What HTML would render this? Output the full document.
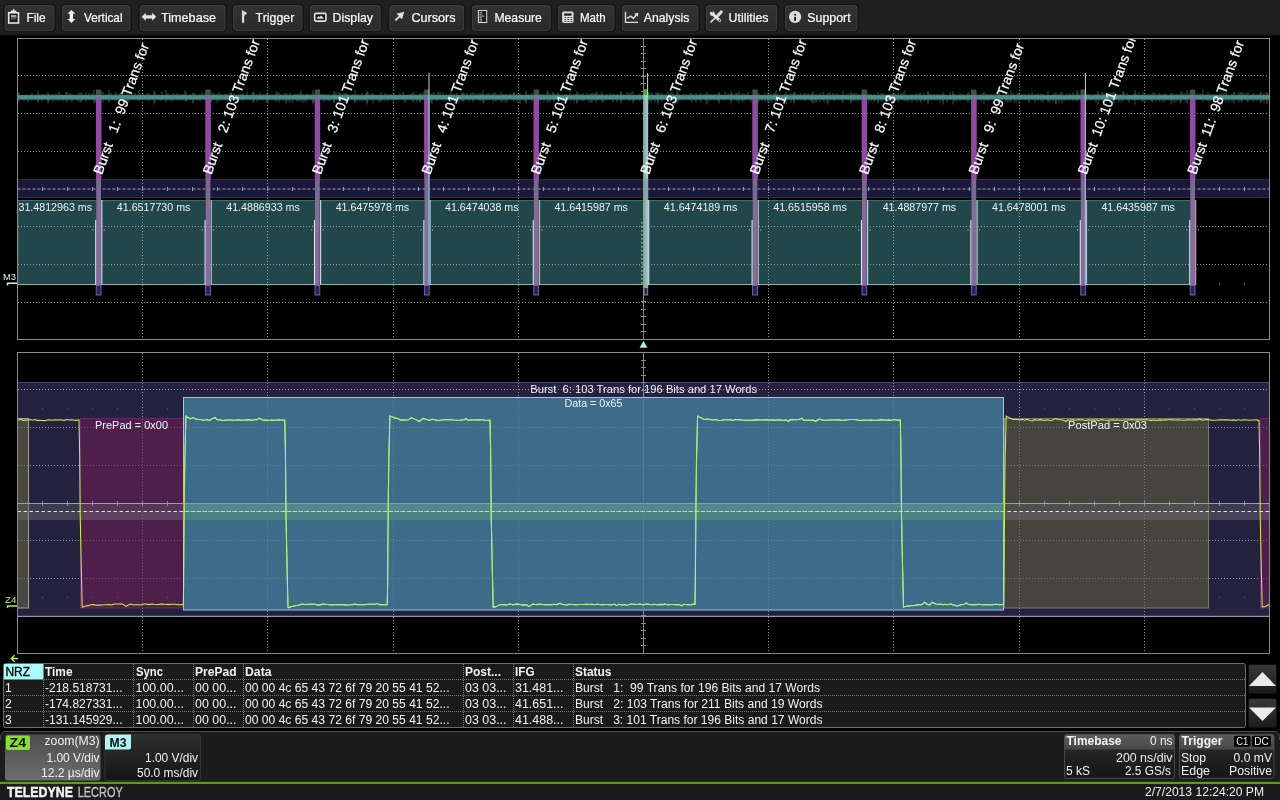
<!DOCTYPE html>
<html><head><meta charset="utf-8"><title>Oscilloscope</title>
<style>html,body{margin:0;padding:0;background:#000;width:1280px;height:800px;overflow:hidden}svg{display:block;position:absolute;left:0;top:0;font-family:"Liberation Sans", sans-serif;will-change:transform;opacity:0.999}text{font-family:"Liberation Sans", sans-serif}</style></head><body>
<svg width="1280" height="800" viewBox="0 0 1280 800">
<defs><linearGradient id="btn" x1="0" y1="0" x2="0" y2="1"><stop offset="0" stop-color="#343434"/><stop offset="1" stop-color="#2b2b2b"/></linearGradient><linearGradient id="hdr" x1="0" y1="0" x2="0" y2="1"><stop offset="0" stop-color="#5c5c5c"/><stop offset="1" stop-color="#484848"/></linearGradient><linearGradient id="z4" x1="0" y1="0" x2="0" y2="1"><stop offset="0" stop-color="#4e4e4e"/><stop offset="1" stop-color="#6e6e6e"/></linearGradient><linearGradient id="m3" x1="0" y1="0" x2="0" y2="1"><stop offset="0" stop-color="#303030"/><stop offset="1" stop-color="#161616"/></linearGradient><linearGradient id="sb" x1="0" y1="0" x2="0" y2="1"><stop offset="0" stop-color="#3a3a3a"/><stop offset="1" stop-color="#1c1c1c"/></linearGradient><clipPath id="ct"><rect x="18" y="39" width="1251" height="300"/></clipPath><clipPath id="cb"><rect x="18" y="353" width="1251" height="300"/></clipPath></defs>
<rect x="0" y="0" width="1280" height="35" fill="#202020"/>
<rect x="0" y="34" width="1280" height="1.5" fill="#181818"/>
<rect x="4" y="4.5" width="51" height="27" rx="3.5" fill="url(#btn)" stroke="#151515" stroke-width="1.6"/>
<rect x="5.1" y="5.6" width="48.8" height="24.8" rx="2.6" fill="none" stroke="#424242" stroke-width="0.8"/>
<text x="26.5" y="22.2" font-size="12.6" fill="#ffffff" textLength="19.1" lengthAdjust="spacingAndGlyphs" stroke="#ffffff" stroke-width="0.2" xml:space="preserve">File</text>
<rect x="61.5" y="4.5" width="69.5" height="27" rx="3.5" fill="url(#btn)" stroke="#151515" stroke-width="1.6"/>
<rect x="62.6" y="5.6" width="67.3" height="24.8" rx="2.6" fill="none" stroke="#424242" stroke-width="0.8"/>
<text x="84" y="22.2" font-size="12.6" fill="#ffffff" textLength="38.5" lengthAdjust="spacingAndGlyphs" stroke="#ffffff" stroke-width="0.2" xml:space="preserve">Vertical</text>
<rect x="139" y="4.5" width="87" height="27" rx="3.5" fill="url(#btn)" stroke="#151515" stroke-width="1.6"/>
<rect x="140.1" y="5.6" width="84.8" height="24.8" rx="2.6" fill="none" stroke="#424242" stroke-width="0.8"/>
<text x="161" y="22.2" font-size="12.6" fill="#ffffff" textLength="55" lengthAdjust="spacingAndGlyphs" stroke="#ffffff" stroke-width="0.2" xml:space="preserve">Timebase</text>
<rect x="232.5" y="4.5" width="70.5" height="27" rx="3.5" fill="url(#btn)" stroke="#151515" stroke-width="1.6"/>
<rect x="233.6" y="5.6" width="68.3" height="24.8" rx="2.6" fill="none" stroke="#424242" stroke-width="0.8"/>
<text x="255.6" y="22.2" font-size="12.6" fill="#ffffff" textLength="38.8" lengthAdjust="spacingAndGlyphs" stroke="#ffffff" stroke-width="0.2" xml:space="preserve">Trigger</text>
<rect x="309.4" y="4.5" width="71.9" height="27" rx="3.5" fill="url(#btn)" stroke="#151515" stroke-width="1.6"/>
<rect x="310.5" y="5.6" width="69.7" height="24.8" rx="2.6" fill="none" stroke="#424242" stroke-width="0.8"/>
<text x="332.5" y="22.2" font-size="12.6" fill="#ffffff" textLength="40.5" lengthAdjust="spacingAndGlyphs" stroke="#ffffff" stroke-width="0.2" xml:space="preserve">Display</text>
<rect x="388.7" y="4.5" width="76.1" height="27" rx="3.5" fill="url(#btn)" stroke="#151515" stroke-width="1.6"/>
<rect x="389.8" y="5.6" width="73.9" height="24.8" rx="2.6" fill="none" stroke="#424242" stroke-width="0.8"/>
<text x="411.5" y="22.2" font-size="12.6" fill="#ffffff" textLength="44.1" lengthAdjust="spacingAndGlyphs" stroke="#ffffff" stroke-width="0.2" xml:space="preserve">Cursors</text>
<rect x="471.3" y="4.5" width="80" height="27" rx="3.5" fill="url(#btn)" stroke="#151515" stroke-width="1.6"/>
<rect x="472.4" y="5.6" width="77.8" height="24.8" rx="2.6" fill="none" stroke="#424242" stroke-width="0.8"/>
<text x="494.4" y="22.2" font-size="12.6" fill="#ffffff" textLength="47.5" lengthAdjust="spacingAndGlyphs" stroke="#ffffff" stroke-width="0.2" xml:space="preserve">Measure</text>
<rect x="557.5" y="4.5" width="57.5" height="27" rx="3.5" fill="url(#btn)" stroke="#151515" stroke-width="1.6"/>
<rect x="558.6" y="5.6" width="55.3" height="24.8" rx="2.6" fill="none" stroke="#424242" stroke-width="0.8"/>
<text x="580" y="22.2" font-size="12.6" fill="#ffffff" textLength="25.6" lengthAdjust="spacingAndGlyphs" stroke="#ffffff" stroke-width="0.2" xml:space="preserve">Math</text>
<rect x="621.3" y="4.5" width="77.7" height="27" rx="3.5" fill="url(#btn)" stroke="#151515" stroke-width="1.6"/>
<rect x="622.4" y="5.6" width="75.5" height="24.8" rx="2.6" fill="none" stroke="#424242" stroke-width="0.8"/>
<text x="643.8" y="22.2" font-size="12.6" fill="#ffffff" textLength="45.6" lengthAdjust="spacingAndGlyphs" stroke="#ffffff" stroke-width="0.2" xml:space="preserve">Analysis</text>
<rect x="705.3" y="4.5" width="72.5" height="27" rx="3.5" fill="url(#btn)" stroke="#151515" stroke-width="1.6"/>
<rect x="706.4" y="5.6" width="70.3" height="24.8" rx="2.6" fill="none" stroke="#424242" stroke-width="0.8"/>
<text x="728.5" y="22.2" font-size="12.6" fill="#ffffff" textLength="40" lengthAdjust="spacingAndGlyphs" stroke="#ffffff" stroke-width="0.2" xml:space="preserve">Utilities</text>
<rect x="784.4" y="4.5" width="73.6" height="27" rx="3.5" fill="url(#btn)" stroke="#151515" stroke-width="1.6"/>
<rect x="785.5" y="5.6" width="71.4" height="24.8" rx="2.6" fill="none" stroke="#424242" stroke-width="0.8"/>
<text x="807.3" y="22.2" font-size="12.6" fill="#ffffff" textLength="43.3" lengthAdjust="spacingAndGlyphs" stroke="#ffffff" stroke-width="0.2" xml:space="preserve">Support</text>
<rect x="8.7" y="12.8" width="9.8" height="10.2" fill="#1c1c1c" stroke="#e6e6e6" stroke-width="1.6"/>
<path d="M10.2 12.6L11.2 10.4H12.6L13.6 8.6L14.6 10.4H16L17 12.6Z" fill="#e6e6e6"/>
<rect x="10.9" y="15" width="5.4" height="2.2" fill="#a6a6a6"/>
<rect x="10.9" y="17.2" width="5.4" height="1.6" fill="#6c6c6c"/>
<rect x="10.9" y="18.8" width="5.4" height="1.4" fill="#3c3c3c"/>
<path d="M71.4 10L75.3 13.8H73.1V19.1H75.3L71.4 22.9L67.5 19.1H69.7V13.8H67.5Z" fill="#f4f4f4"/>
<path d="M141.7 16.8L145.7 12.8V15.2H152.2V12.8L156.2 16.8L152.2 20.8V18.4H145.7V20.8Z" fill="#e8e8e8"/>
<path d="M241.9 10L247.2 13L244.2 15.7V22.8H241.9Z" fill="#dadada"/>
<rect x="314.7" y="13.4" width="11.2" height="7.7" rx="1" fill="#1a1a1a" stroke="#e6e6e6" stroke-width="1.6"/>
<path d="M316.6 18.7L318.2 15.9L319.4 17.1L321 15.5L322.4 16.8L323.9 18.7Z" fill="#e0e0e0"/>
<path d="M404.3 11.7L396.5 13.8L398.9 15.7L395.2 19.2Q394.5 20.6 396 21.1L399.9 17.3L401.9 19.3Z" fill="#e4e4e4"/>
<rect x="478.4" y="10.5" width="8.3" height="12" fill="#202020" stroke="#cfcfcf" stroke-width="1.1"/>
<path d="M479.5 12.6H482M479.5 14.3H482M479.5 16.1H484.3M479.5 17.9H482M479.5 19.6H482M479.5 21.2H482" stroke="#bdbdbd" stroke-width="0.9" fill="none"/>
<rect x="562.2" y="11.4" width="11.3" height="11.5" rx="1.6" fill="#e6e6e6"/>
<rect x="564.1" y="13.4" width="7.5" height="2.3" fill="#202020"/>
<rect x="564.4" y="17" width="1.9" height="0.9" fill="#2a2a2a"/>
<rect x="564.4" y="19.1" width="1.9" height="0.9" fill="#2a2a2a"/>
<rect x="564.4" y="21" width="1.9" height="0.9" fill="#2a2a2a"/>
<rect x="567.4" y="17" width="1.9" height="0.9" fill="#2a2a2a"/>
<rect x="567.4" y="19.1" width="1.9" height="0.9" fill="#2a2a2a"/>
<rect x="567.4" y="21" width="1.9" height="0.9" fill="#2a2a2a"/>
<rect x="570.4" y="17" width="1.9" height="0.9" fill="#2a2a2a"/>
<rect x="570.4" y="19.1" width="1.9" height="0.9" fill="#2a2a2a"/>
<rect x="570.4" y="21" width="1.9" height="0.9" fill="#2a2a2a"/>
<path d="M625.5 11.7V22.4H638" stroke="#dcdcdc" stroke-width="1.4" fill="none"/>
<path d="M627 18.3L630.8 16.2L633.4 18.4L636.6 14.6" stroke="#dcdcdc" stroke-width="1.5" fill="none"/>
<path d="M638.3 12.8L637.9 17L634.2 13.5Z" fill="#dcdcdc"/>
<path d="M721.2 12L718 15.4" stroke="#dedede" stroke-width="3.1" stroke-linecap="round" fill="none"/>
<path d="M718 15.4L711 21.9" stroke="#d4d4d4" stroke-width="1.7" stroke-linecap="round" fill="none"/>
<path d="M712.6 13.8L719.6 20.5" stroke="#e4e4e4" stroke-width="3" stroke-linecap="round" fill="none"/>
<circle cx="712.3" cy="13.6" r="2.4" fill="#e4e4e4"/>
<path d="M710.2 10.6L713.2 13.2L712.4 10.4Z" fill="#2e2e2e"/>
<circle cx="719.5" cy="20.4" r="0.8" fill="#2a2a2a"/>
<circle cx="795.1" cy="16.9" r="6.1" fill="#dcdcdc"/>
<rect x="794.2" y="13.8" width="1.8" height="1.8" fill="#333"/>
<rect x="794.2" y="16.9" width="1.8" height="3.9" fill="#0a0a0a"/>
<g clip-path="url(#ct)">
<rect x="17" y="179" width="1253" height="19" fill="#1c1a3b"/>
<line x1="17" y1="179.5" x2="1270" y2="179.5" stroke="#2f2c55" stroke-width="1"/>
<line x1="17" y1="197.5" x2="1270" y2="197.5" stroke="#2f2c55" stroke-width="1"/>
<rect x="17.5" y="200" width="78.8" height="85" fill="#23484c"/>
<line x1="17.5" y1="200.5" x2="96.3" y2="200.5" stroke="#3f6e6e" stroke-width="1"/>
<line x1="17.7" y1="200" x2="17.7" y2="285" stroke="#5c9a97" stroke-width="1"/>
<line x1="17.5" y1="284.5" x2="96.3" y2="284.5" stroke="#86b4b0" stroke-width="1"/>
<rect x="101.9" y="200" width="103.8" height="85" fill="#23484c"/>
<line x1="101.9" y1="200.5" x2="205.7" y2="200.5" stroke="#3f6e6e" stroke-width="1"/>
<line x1="102.1" y1="200" x2="102.1" y2="285" stroke="#5c9a97" stroke-width="1"/>
<line x1="101.9" y1="284.5" x2="205.7" y2="284.5" stroke="#86b4b0" stroke-width="1"/>
<rect x="211.3" y="200" width="103.8" height="85" fill="#23484c"/>
<line x1="211.3" y1="200.5" x2="315.1" y2="200.5" stroke="#3f6e6e" stroke-width="1"/>
<line x1="211.5" y1="200" x2="211.5" y2="285" stroke="#5c9a97" stroke-width="1"/>
<line x1="211.3" y1="284.5" x2="315.1" y2="284.5" stroke="#86b4b0" stroke-width="1"/>
<rect x="320.7" y="200" width="103.8" height="85" fill="#23484c"/>
<line x1="320.7" y1="200.5" x2="424.5" y2="200.5" stroke="#3f6e6e" stroke-width="1"/>
<line x1="320.9" y1="200" x2="320.9" y2="285" stroke="#5c9a97" stroke-width="1"/>
<line x1="320.7" y1="284.5" x2="424.5" y2="284.5" stroke="#86b4b0" stroke-width="1"/>
<rect x="430.1" y="200" width="103.8" height="85" fill="#23484c"/>
<line x1="430.1" y1="200.5" x2="533.9" y2="200.5" stroke="#3f6e6e" stroke-width="1"/>
<line x1="430.3" y1="200" x2="430.3" y2="285" stroke="#5c9a97" stroke-width="1"/>
<line x1="430.1" y1="284.5" x2="533.9" y2="284.5" stroke="#86b4b0" stroke-width="1"/>
<rect x="539.5" y="200" width="103.8" height="85" fill="#23484c"/>
<line x1="539.5" y1="200.5" x2="643.3" y2="200.5" stroke="#3f6e6e" stroke-width="1"/>
<line x1="539.7" y1="200" x2="539.7" y2="285" stroke="#5c9a97" stroke-width="1"/>
<line x1="539.5" y1="284.5" x2="643.3" y2="284.5" stroke="#86b4b0" stroke-width="1"/>
<rect x="648.9" y="200" width="103.8" height="85" fill="#23484c"/>
<line x1="648.9" y1="200.5" x2="752.7" y2="200.5" stroke="#3f6e6e" stroke-width="1"/>
<line x1="649.1" y1="200" x2="649.1" y2="285" stroke="#5c9a97" stroke-width="1"/>
<line x1="648.9" y1="284.5" x2="752.7" y2="284.5" stroke="#86b4b0" stroke-width="1"/>
<rect x="758.3" y="200" width="103.8" height="85" fill="#23484c"/>
<line x1="758.3" y1="200.5" x2="862.1" y2="200.5" stroke="#3f6e6e" stroke-width="1"/>
<line x1="758.5" y1="200" x2="758.5" y2="285" stroke="#5c9a97" stroke-width="1"/>
<line x1="758.3" y1="284.5" x2="862.1" y2="284.5" stroke="#86b4b0" stroke-width="1"/>
<rect x="867.7" y="200" width="103.8" height="85" fill="#23484c"/>
<line x1="867.7" y1="200.5" x2="971.5" y2="200.5" stroke="#3f6e6e" stroke-width="1"/>
<line x1="867.9" y1="200" x2="867.9" y2="285" stroke="#5c9a97" stroke-width="1"/>
<line x1="867.7" y1="284.5" x2="971.5" y2="284.5" stroke="#86b4b0" stroke-width="1"/>
<rect x="977.1" y="200" width="103.8" height="85" fill="#23484c"/>
<line x1="977.1" y1="200.5" x2="1080.9" y2="200.5" stroke="#3f6e6e" stroke-width="1"/>
<line x1="977.3" y1="200" x2="977.3" y2="285" stroke="#5c9a97" stroke-width="1"/>
<line x1="977.1" y1="284.5" x2="1080.9" y2="284.5" stroke="#86b4b0" stroke-width="1"/>
<rect x="1086.5" y="200" width="103.8" height="85" fill="#23484c"/>
<line x1="1086.5" y1="200.5" x2="1190.3" y2="200.5" stroke="#3f6e6e" stroke-width="1"/>
<line x1="1086.7" y1="200" x2="1086.7" y2="285" stroke="#5c9a97" stroke-width="1"/>
<line x1="1086.5" y1="284.5" x2="1190.3" y2="284.5" stroke="#86b4b0" stroke-width="1"/>
</g>
<line x1="142.5" y1="39" x2="142.5" y2="339" stroke="#b4b4b4" stroke-width="1" stroke-dasharray="1 2" opacity="0.8"/>
<line x1="267.5" y1="39" x2="267.5" y2="339" stroke="#b4b4b4" stroke-width="1" stroke-dasharray="1 2" opacity="0.8"/>
<line x1="393.5" y1="39" x2="393.5" y2="339" stroke="#b4b4b4" stroke-width="1" stroke-dasharray="1 2" opacity="0.8"/>
<line x1="518.5" y1="39" x2="518.5" y2="339" stroke="#b4b4b4" stroke-width="1" stroke-dasharray="1 2" opacity="0.8"/>
<line x1="768.5" y1="39" x2="768.5" y2="339" stroke="#b4b4b4" stroke-width="1" stroke-dasharray="1 2" opacity="0.8"/>
<line x1="893.5" y1="39" x2="893.5" y2="339" stroke="#b4b4b4" stroke-width="1" stroke-dasharray="1 2" opacity="0.8"/>
<line x1="1019.5" y1="39" x2="1019.5" y2="339" stroke="#b4b4b4" stroke-width="1" stroke-dasharray="1 2" opacity="0.8"/>
<line x1="1144.5" y1="39" x2="1144.5" y2="339" stroke="#b4b4b4" stroke-width="1" stroke-dasharray="1 2" opacity="0.8"/>
<line x1="18" y1="75.5" x2="1269" y2="75.5" stroke="#b4b4b4" stroke-width="1" stroke-dasharray="1 2" opacity="0.8"/>
<line x1="18" y1="113.5" x2="1269" y2="113.5" stroke="#b4b4b4" stroke-width="1" stroke-dasharray="1 2" opacity="0.8"/>
<line x1="18" y1="151.5" x2="1269" y2="151.5" stroke="#b4b4b4" stroke-width="1" stroke-dasharray="1 2" opacity="0.8"/>
<line x1="18" y1="226.5" x2="1269" y2="226.5" stroke="#b4b4b4" stroke-width="1" stroke-dasharray="1 2" opacity="0.8"/>
<line x1="18" y1="264.5" x2="1269" y2="264.5" stroke="#b4b4b4" stroke-width="1" stroke-dasharray="1 2" opacity="0.8"/>
<line x1="18" y1="302.5" x2="1269" y2="302.5" stroke="#b4b4b4" stroke-width="1" stroke-dasharray="1 2" opacity="0.8"/>
<g clip-path="url(#ct)">
<line x1="17.5" y1="189" x2="1269.5" y2="189" stroke="#a8a1c8" stroke-width="1" stroke-dasharray="3 2"/>
<path d="M42.5 187V191M67.5 187V191M92.5 187V191M117.5 187V191M142.5 187V191M167.5 187V191M192.5 187V191M217.5 187V191M242.5 187V191M267.5 187V191M292.5 187V191M317.5 187V191M343.5 187V191M368.5 187V191M393.5 187V191M418.5 187V191M443.5 187V191M468.5 187V191M493.5 187V191M518.5 187V191M543.5 187V191M568.5 187V191M593.5 187V191M618.5 187V191M643.5 187V191M668.5 187V191M693.5 187V191M718.5 187V191M743.5 187V191M768.5 187V191M793.5 187V191M818.5 187V191M843.5 187V191M868.5 187V191M893.5 187V191M918.5 187V191M943.5 187V191M969.5 187V191M994.5 187V191M1019.5 187V191M1044.5 187V191M1069.5 187V191M1094.5 187V191M1119.5 187V191M1144.5 187V191M1169.5 187V191M1194.5 187V191M1219.5 187V191M1244.5 187V191" stroke="#9c96bc" stroke-width="1" fill="none"/>
<line x1="643.5" y1="38.5" x2="643.5" y2="339.5" stroke="#8a8a8a" stroke-width="1"/>
<path d="M641 46.5H646M641 53.5H646M641 61.5H646M641 68.5H646M641 76.5H646M641 83.5H646M641 91.5H646M641 301.5H646M641 309.5H646M641 316.5H646M641 324.5H646M641 331.5H646" stroke="#8a8a8a" stroke-width="1" fill="none"/>
<path d="M18 93V100.5M21 95V99.5M24 95V101.5M27 95V100.5M28 95V102.5M31 95V100.5M32 93V99.5M35 95V100.5M38 95V102.5M39 94V99.5M42 94V101.5M45 94V99.5M48 94V100.5M49 94V101.5M50 95V99.5M53 94V102.5M56 93V101.5M59 92V101.5M61 94V100.5M63 95V101.5M66 92V101.5M69 94V99.5M70 93V100.5M72 94V102.5M75 95V99.5M78 93V101.5M80 92V102.5M81 95V101.5M84 95V99.5M86 92V101.5M89 93V99.5M92 93V100.5M95 95V102.5M96 94V101.5M98 94V102.5M101 92V99.5M103 92V102.5M106 94V100.5M109 94V102.5M111 93V100.5M113 95V100.5M115 94V100.5M116 92V100.5M118 94V99.5M120 93V101.5M123 93V100.5M126 95V102.5M129 93V102.5M132 93V99.5M135 93V99.5M137 95V100.5M140 94V99.5M142 95V99.5M143 94V99.5M145 95V99.5M147 93V100.5M149 93V101.5M152 95V99.5M155 92V102.5M158 94V99.5M160 95V101.5M162 92V100.5M165 95V100.5M168 93V100.5M171 95V101.5M172 94V101.5M174 93V100.5M177 93V100.5M180 94V100.5M183 94V100.5M186 92V101.5M187 95V101.5M190 94V100.5M193 93V102.5M195 93V99.5M197 95V100.5M200 94V101.5M202 92V99.5M205 93V99.5M206 93V100.5M209 94V102.5M211 95V102.5M214 93V99.5M216 94V100.5M217 94V102.5M219 92V101.5M221 94V99.5M222 95V100.5M225 94V100.5M226 94V100.5M228 94V101.5M230 93V100.5M231 93V102.5M234 93V100.5M237 94V99.5M240 94V99.5M242 94V100.5M245 95V99.5M247 92V99.5M250 95V100.5M252 94V99.5M253 92V99.5M254 92V101.5M257 94V101.5M260 92V100.5M263 94V100.5M266 94V102.5M267 93V102.5M269 95V100.5M272 95V100.5M274 95V100.5M276 94V101.5M278 92V100.5M279 93V102.5M281 94V100.5M284 93V101.5M287 94V101.5M289 95V101.5M290 93V102.5M293 95V102.5M295 94V99.5M296 94V99.5M297 94V101.5M298 94V101.5M300 93V101.5M303 94V102.5M305 95V101.5M306 94V102.5M307 94V99.5M308 94V99.5M311 94V99.5M313 95V102.5M314 93V102.5M316 94V99.5M319 94V99.5M321 94V99.5M323 94V101.5M325 94V101.5M328 94V101.5M330 95V101.5M331 95V99.5M334 94V102.5M336 92V99.5M339 92V102.5M342 94V100.5M344 93V100.5M346 93V101.5M347 94V99.5M348 94V102.5M350 95V99.5M353 94V100.5M355 95V102.5M357 94V101.5M360 95V101.5M362 93V101.5M364 95V101.5M366 93V100.5M367 93V102.5M368 92V101.5M371 94V100.5M374 95V99.5M376 95V100.5M379 95V102.5M380 94V101.5M382 95V100.5M385 93V101.5M388 94V101.5M391 94V99.5M394 93V100.5M397 95V100.5M398 95V99.5M400 93V99.5M403 92V99.5M404 94V102.5M406 95V102.5M407 95V99.5M410 94V99.5M412 94V100.5M414 92V102.5M417 95V102.5M419 95V100.5M420 94V101.5M422 94V100.5M423 92V99.5M426 94V99.5M428 92V101.5M431 94V102.5M434 92V99.5M437 94V101.5M438 92V99.5M440 92V99.5M443 92V101.5M446 94V100.5M447 95V100.5M450 94V101.5M452 94V99.5M454 94V102.5M457 93V99.5M459 95V102.5M462 93V101.5M464 93V101.5M467 93V99.5M469 95V101.5M471 93V99.5M473 95V101.5M475 93V99.5M478 93V99.5M480 93V101.5M481 94V99.5M482 94V100.5M484 94V102.5M487 93V100.5M489 93V99.5M492 94V99.5M493 93V102.5M496 94V101.5M499 95V100.5M501 92V102.5M503 94V101.5M505 94V102.5M507 94V102.5M510 93V99.5M512 94V99.5M514 92V100.5M517 93V102.5M520 94V100.5M522 95V100.5M524 95V101.5M526 93V101.5M529 94V99.5M532 93V102.5M535 94V102.5M537 93V99.5M540 94V101.5M542 94V99.5M544 94V102.5M547 92V102.5M549 95V100.5M550 93V102.5M553 92V99.5M554 93V102.5M557 94V99.5M559 94V100.5M562 95V102.5M563 95V99.5M565 94V99.5M567 94V101.5M570 93V99.5M571 95V101.5M574 94V102.5M576 94V99.5M577 94V102.5M579 93V100.5M582 94V100.5M583 93V101.5M584 95V100.5M587 93V99.5M589 94V102.5M591 94V102.5M592 93V102.5M594 93V100.5M595 94V99.5M597 92V100.5M599 94V100.5M602 94V101.5M604 95V102.5M607 94V100.5M610 93V99.5M613 94V102.5M614 94V99.5M617 94V102.5M618 95V100.5M621 92V101.5M622 95V100.5M624 94V100.5M627 92V99.5M629 93V101.5M631 92V100.5M632 95V99.5M634 95V101.5M637 95V100.5M640 93V101.5M643 95V99.5M646 94V101.5M649 92V100.5M651 93V102.5M652 93V100.5M655 95V102.5M656 92V99.5M657 94V100.5M658 93V101.5M660 93V99.5M662 93V101.5M664 95V99.5M665 94V99.5M668 92V102.5M670 93V102.5M672 92V100.5M673 94V100.5M676 94V101.5M678 92V101.5M681 95V100.5M684 94V100.5M687 95V99.5M690 93V100.5M693 95V99.5M695 95V100.5M696 93V102.5M699 94V100.5M701 93V102.5M704 94V99.5M706 94V101.5M709 94V101.5M711 94V100.5M714 94V100.5M716 94V100.5M718 94V101.5M719 93V101.5M721 94V99.5M724 95V99.5M725 92V100.5M728 93V99.5M730 94V99.5M731 94V100.5M732 93V100.5M735 94V99.5M736 93V100.5M737 93V101.5M739 95V100.5M741 95V100.5M742 93V102.5M744 94V101.5M745 94V99.5M748 92V99.5M751 95V102.5M754 94V99.5M756 93V101.5M759 94V101.5M762 95V101.5M765 93V102.5M768 95V101.5M770 93V102.5M772 95V102.5M774 93V99.5M775 93V101.5M778 94V100.5M779 95V100.5M782 95V101.5M785 94V100.5M787 94V100.5M790 94V99.5M791 93V102.5M793 94V100.5M794 92V101.5M795 93V99.5M798 94V100.5M801 93V100.5M804 94V100.5M805 93V100.5M808 93V99.5M810 94V100.5M811 95V101.5M812 93V102.5M815 94V102.5M817 94V102.5M820 93V102.5M823 92V100.5M824 95V102.5M827 94V102.5M830 92V100.5M833 93V99.5M834 94V101.5M837 93V99.5M840 95V99.5M842 95V101.5M845 95V99.5M848 93V100.5M849 95V99.5M851 94V102.5M853 94V100.5M854 93V101.5M856 93V101.5M859 94V101.5M862 92V100.5M865 94V100.5M867 93V99.5M869 94V102.5M871 94V101.5M874 94V101.5M875 95V101.5M878 95V101.5M881 93V101.5M883 93V101.5M886 94V101.5M888 95V102.5M890 94V99.5M892 94V101.5M895 93V99.5M896 94V100.5M898 93V102.5M901 93V99.5M903 92V100.5M906 95V99.5M907 95V101.5M909 95V101.5M912 94V102.5M915 94V100.5M917 93V102.5M919 94V99.5M921 94V102.5M922 95V100.5M924 93V101.5M925 95V101.5M928 92V102.5M930 94V99.5M931 95V99.5M934 94V100.5M936 95V99.5M937 94V100.5M940 94V102.5M943 94V101.5M944 94V99.5M947 95V102.5M950 92V99.5M953 94V100.5M954 94V100.5M955 95V101.5M957 95V101.5M960 93V101.5M962 94V99.5M965 95V100.5M967 94V100.5M969 93V100.5M972 93V100.5M975 92V102.5M978 95V99.5M981 94V101.5M983 93V99.5M986 94V100.5M987 95V99.5M988 94V101.5M990 95V99.5M991 94V99.5M992 95V99.5M995 93V100.5M998 95V102.5M999 94V100.5M1001 95V99.5M1002 95V101.5M1005 95V100.5M1006 94V101.5M1008 93V102.5M1010 95V101.5M1012 94V99.5M1014 93V102.5M1016 95V102.5M1017 93V99.5M1019 92V99.5M1022 94V99.5M1025 94V100.5M1028 95V100.5M1030 95V99.5M1032 92V99.5M1035 94V102.5M1038 93V101.5M1041 94V101.5M1043 94V102.5M1045 95V99.5M1048 95V101.5M1050 95V102.5M1053 95V102.5M1054 93V100.5M1056 94V102.5M1059 94V102.5M1061 92V100.5M1064 95V101.5M1067 93V100.5M1070 93V100.5M1073 92V101.5M1076 94V100.5M1078 92V100.5M1081 94V101.5M1083 94V100.5M1085 93V101.5M1087 94V101.5M1089 94V99.5M1091 95V100.5M1094 94V100.5M1096 94V102.5M1098 94V99.5M1099 94V100.5M1102 92V99.5M1103 93V102.5M1105 94V102.5M1106 94V101.5M1109 93V99.5M1111 93V102.5M1113 94V100.5M1114 92V102.5M1116 94V99.5M1119 94V102.5M1121 94V102.5M1124 92V99.5M1127 93V100.5M1129 95V102.5M1132 95V99.5M1134 94V100.5M1136 93V99.5M1139 92V100.5M1142 95V101.5M1145 93V102.5M1148 94V100.5M1151 95V101.5M1152 94V101.5M1155 93V99.5M1156 95V102.5M1159 93V101.5M1160 94V101.5M1163 94V102.5M1166 94V100.5M1168 95V100.5M1171 94V100.5M1173 93V102.5M1175 94V102.5M1177 94V101.5M1180 94V102.5M1182 92V99.5M1184 93V100.5M1186 93V102.5M1189 93V99.5M1191 94V101.5M1194 95V99.5M1197 93V100.5M1200 93V99.5M1201 94V99.5M1203 94V99.5M1206 94V100.5M1208 92V101.5M1210 94V102.5M1213 94V99.5M1216 94V100.5M1219 94V99.5M1222 95V99.5M1224 93V100.5M1226 92V102.5M1229 95V102.5M1232 94V102.5M1234 92V100.5M1237 95V100.5M1239 92V102.5M1241 92V101.5M1244 93V99.5M1246 93V99.5M1247 95V101.5M1248 92V102.5M1250 95V100.5M1253 94V101.5M1254 93V101.5M1257 94V101.5M1260 93V102.5M1262 95V101.5M1264 93V102.5M1267 93V101.5" stroke="#37605d" stroke-width="1" fill="none" opacity="0.9"/>
<path d="M19 92V102.5M38 91V101.5M48 92V103.5M67 92V102.5M82 93V101.5M94 90V103.5M109 90V101.5M121 92V101.5M127 93V102.5M139 90V101.5M154 90V104.5M166 90V102.5M185 90V101.5M193 93V103.5M212 92V101.5M231 92V101.5M243 93V101.5M253 92V103.5M268 92V103.5M276 91V101.5M286 93V103.5M301 90V101.5M313 90V104.5M319 93V103.5M334 91V103.5M340 93V103.5M355 90V102.5M367 91V104.5M373 93V103.5M381 92V101.5M393 93V101.5M412 93V101.5M420 93V102.5M432 93V103.5M451 90V102.5M463 92V101.5M473 92V101.5M483 90V103.5M495 92V101.5M514 93V101.5M520 93V104.5M526 91V103.5M536 90V102.5M548 90V101.5M558 92V104.5M577 91V103.5M596 92V102.5M602 92V102.5M621 91V103.5M633 91V103.5M648 92V103.5M658 93V104.5M677 90V103.5M692 93V102.5M707 92V104.5M719 92V103.5M731 91V104.5M739 91V103.5M758 93V103.5M768 92V103.5M776 90V101.5M786 92V104.5M794 92V104.5M813 91V103.5M828 93V104.5M843 91V103.5M851 92V103.5M866 93V103.5M878 92V103.5M893 93V103.5M905 90V101.5M920 92V101.5M928 91V104.5M943 92V104.5M953 91V104.5M968 92V102.5M976 92V101.5M984 92V103.5M999 90V103.5M1011 90V102.5M1019 93V103.5M1029 93V103.5M1048 91V101.5M1056 92V104.5M1062 92V103.5M1077 90V101.5M1083 93V102.5M1098 91V104.5M1113 92V103.5M1123 91V101.5M1135 90V104.5M1143 92V101.5M1153 92V102.5M1165 93V101.5M1171 93V104.5M1181 91V103.5M1187 90V103.5M1193 93V103.5M1203 90V102.5M1222 93V104.5M1234 92V103.5M1242 92V102.5M1261 92V102.5M1267 92V103.5" stroke="#55716f" stroke-width="1" fill="none" opacity="0.7"/>
<rect x="17" y="94.8" width="1253" height="4.9" fill="#3f7f7a"/>
<rect x="17" y="95.6" width="1253" height="3.2" fill="#4b918a"/>
<rect x="95.9" y="89.5" width="5.4" height="5.5" fill="#3f5255"/>
<rect x="95.9" y="95" width="5.4" height="84" fill="#9a47a3"/>
<rect x="99.7" y="99.5" width="1.6" height="80" fill="#7a58a4" opacity="0.9"/>
<rect x="95.9" y="95" width="5.4" height="4.4" fill="#6b7d96"/>
<rect x="96.2" y="179" width="4.8" height="21" fill="#7c6b90"/>
<rect x="96.2" y="200" width="4.8" height="85" fill="#886c9a"/>
<line x1="95.7" y1="220" x2="95.7" y2="285" stroke="#e4e0f4" stroke-width="1.1"/>
<line x1="101.7" y1="200" x2="101.7" y2="285" stroke="#c4d2e2" stroke-width="1"/>
<rect x="92.4" y="229.5" width="1" height="1" fill="#d8d8e8"/>
<rect x="103.8" y="229.5" width="1" height="1" fill="#d8d8e8"/>
<rect x="96.2" y="285.5" width="4.8" height="9.5" fill="#2b2266" stroke="#7d6ba8" stroke-width="0.9"/>
<rect x="205.3" y="89.5" width="5.4" height="5.5" fill="#3f5255"/>
<rect x="205.3" y="95" width="5.4" height="84" fill="#9a47a3"/>
<rect x="209.1" y="99.5" width="1.6" height="80" fill="#7a58a4" opacity="0.9"/>
<rect x="205.3" y="95" width="5.4" height="4.4" fill="#6b7d96"/>
<rect x="205.6" y="179" width="4.8" height="21" fill="#7c6b90"/>
<rect x="205.6" y="200" width="4.8" height="85" fill="#886c9a"/>
<line x1="205.1" y1="220" x2="205.1" y2="285" stroke="#e4e0f4" stroke-width="1.1"/>
<line x1="211.1" y1="200" x2="211.1" y2="285" stroke="#c4d2e2" stroke-width="1"/>
<rect x="201.8" y="229.5" width="1" height="1" fill="#d8d8e8"/>
<rect x="213.2" y="229.5" width="1" height="1" fill="#d8d8e8"/>
<rect x="205.6" y="285.5" width="4.8" height="9.5" fill="#2b2266" stroke="#7d6ba8" stroke-width="0.9"/>
<rect x="314.7" y="89.5" width="5.4" height="5.5" fill="#3f5255"/>
<rect x="314.7" y="95" width="5.4" height="84" fill="#9a47a3"/>
<rect x="318.5" y="99.5" width="1.6" height="80" fill="#7a58a4" opacity="0.9"/>
<rect x="314.7" y="95" width="5.4" height="4.4" fill="#6b7d96"/>
<rect x="315" y="179" width="4.8" height="21" fill="#7c6b90"/>
<rect x="315" y="200" width="4.8" height="85" fill="#886c9a"/>
<line x1="314.5" y1="220" x2="314.5" y2="285" stroke="#e4e0f4" stroke-width="1.1"/>
<line x1="320.5" y1="200" x2="320.5" y2="285" stroke="#c4d2e2" stroke-width="1"/>
<rect x="311.2" y="229.5" width="1" height="1" fill="#d8d8e8"/>
<rect x="322.6" y="229.5" width="1" height="1" fill="#d8d8e8"/>
<rect x="315" y="285.5" width="4.8" height="9.5" fill="#2b2266" stroke="#7d6ba8" stroke-width="0.9"/>
<rect x="424.1" y="89.5" width="5.4" height="5.5" fill="#3f5255"/>
<rect x="424.1" y="95" width="5.4" height="84" fill="#9a47a3"/>
<rect x="427.9" y="99.5" width="1.6" height="80" fill="#7a58a4" opacity="0.9"/>
<rect x="424.1" y="95" width="5.4" height="4.4" fill="#6b7d96"/>
<rect x="424.4" y="179" width="4.8" height="21" fill="#7c6b90"/>
<rect x="424.4" y="200" width="4.8" height="85" fill="#886c9a"/>
<line x1="423.9" y1="220" x2="423.9" y2="285" stroke="#e4e0f4" stroke-width="1.1"/>
<line x1="429.9" y1="200" x2="429.9" y2="285" stroke="#c4d2e2" stroke-width="1"/>
<rect x="420.6" y="229.5" width="1" height="1" fill="#d8d8e8"/>
<rect x="432" y="229.5" width="1" height="1" fill="#d8d8e8"/>
<line x1="429" y1="73" x2="429" y2="95" stroke="#c9d6da" stroke-width="1"/>
<line x1="429" y1="95" x2="429" y2="285" stroke="#86c2e4" stroke-width="1.2"/>
<rect x="424.4" y="285.5" width="4.8" height="9.5" fill="#2b2266" stroke="#7d6ba8" stroke-width="0.9"/>
<rect x="533.5" y="89.5" width="5.4" height="5.5" fill="#3f5255"/>
<rect x="533.5" y="95" width="5.4" height="84" fill="#9a47a3"/>
<rect x="537.3" y="99.5" width="1.6" height="80" fill="#7a58a4" opacity="0.9"/>
<rect x="533.5" y="95" width="5.4" height="4.4" fill="#6b7d96"/>
<rect x="533.8" y="179" width="4.8" height="21" fill="#7c6b90"/>
<rect x="533.8" y="200" width="4.8" height="85" fill="#886c9a"/>
<line x1="533.3" y1="220" x2="533.3" y2="285" stroke="#e4e0f4" stroke-width="1.1"/>
<line x1="539.3" y1="200" x2="539.3" y2="285" stroke="#c4d2e2" stroke-width="1"/>
<rect x="530" y="229.5" width="1" height="1" fill="#d8d8e8"/>
<rect x="541.4" y="229.5" width="1" height="1" fill="#d8d8e8"/>
<rect x="533.8" y="285.5" width="4.8" height="9.5" fill="#2b2266" stroke="#7d6ba8" stroke-width="0.9"/>
<rect x="643.6" y="89" width="4.5" height="6" fill="#4e9a46"/>
<rect x="643.6" y="95" width="4.5" height="190" fill="#8db79a"/>
<rect x="646.2" y="99.5" width="1.9" height="185.5" fill="#a3c3de"/>
<rect x="643.6" y="94.8" width="4.5" height="4.9" fill="#8fdca0"/>
<rect x="643.6" y="179" width="4.5" height="21" fill="#7fa596" opacity="0.75"/>
<line x1="647.6" y1="73" x2="647.6" y2="95" stroke="#c9d6da" stroke-width="1"/>
<line x1="648.5" y1="200" x2="648.5" y2="285" stroke="#c4d2e2" stroke-width="1"/>
<rect x="641.4" y="222" width="1" height="1.6" fill="#d8e0e8"/>
<rect x="641.4" y="226" width="1" height="1.6" fill="#d8e0e8"/>
<rect x="641.4" y="230" width="1" height="1.6" fill="#d8e0e8"/>
<rect x="641.4" y="234" width="1" height="1.6" fill="#d8e0e8"/>
<rect x="641.4" y="238" width="1" height="1.6" fill="#d8e0e8"/>
<rect x="641.4" y="242" width="1" height="1.6" fill="#d8e0e8"/>
<rect x="641.4" y="246" width="1" height="1.6" fill="#d8e0e8"/>
<rect x="641.4" y="250" width="1" height="1.6" fill="#d8e0e8"/>
<rect x="641.4" y="254" width="1" height="1.6" fill="#d8e0e8"/>
<rect x="641.4" y="258" width="1" height="1.6" fill="#d8e0e8"/>
<rect x="641.4" y="262" width="1" height="1.6" fill="#d8e0e8"/>
<rect x="641.4" y="266" width="1" height="1.6" fill="#d8e0e8"/>
<rect x="641.4" y="270" width="1" height="1.6" fill="#d8e0e8"/>
<rect x="641.4" y="274" width="1" height="1.6" fill="#d8e0e8"/>
<rect x="641.4" y="278" width="1" height="1.6" fill="#d8e0e8"/>
<rect x="641.4" y="282" width="1" height="1.6" fill="#d8e0e8"/>
<rect x="644" y="285.5" width="3.7" height="9.5" fill="#2b2a4a" stroke="#8f8fb0" stroke-width="0.9"/>
<rect x="643.6" y="285" width="4.5" height="3" fill="#86c08c"/>
<rect x="752.3" y="89.5" width="5.4" height="5.5" fill="#3f5255"/>
<rect x="752.3" y="95" width="5.4" height="84" fill="#9a47a3"/>
<rect x="756.1" y="99.5" width="1.6" height="80" fill="#7a58a4" opacity="0.9"/>
<rect x="752.3" y="95" width="5.4" height="4.4" fill="#6b7d96"/>
<rect x="752.6" y="179" width="4.8" height="21" fill="#7c6b90"/>
<rect x="752.6" y="200" width="4.8" height="85" fill="#886c9a"/>
<line x1="752.1" y1="220" x2="752.1" y2="285" stroke="#e4e0f4" stroke-width="1.1"/>
<line x1="758.1" y1="200" x2="758.1" y2="285" stroke="#c4d2e2" stroke-width="1"/>
<rect x="748.8" y="229.5" width="1" height="1" fill="#d8d8e8"/>
<rect x="760.2" y="229.5" width="1" height="1" fill="#d8d8e8"/>
<rect x="752.6" y="285.5" width="4.8" height="9.5" fill="#2b2266" stroke="#7d6ba8" stroke-width="0.9"/>
<rect x="861.7" y="89.5" width="5.4" height="5.5" fill="#3f5255"/>
<rect x="861.7" y="95" width="5.4" height="84" fill="#9a47a3"/>
<rect x="865.5" y="99.5" width="1.6" height="80" fill="#7a58a4" opacity="0.9"/>
<rect x="861.7" y="95" width="5.4" height="4.4" fill="#6b7d96"/>
<rect x="862" y="179" width="4.8" height="21" fill="#7c6b90"/>
<rect x="862" y="200" width="4.8" height="85" fill="#886c9a"/>
<line x1="861.5" y1="220" x2="861.5" y2="285" stroke="#e4e0f4" stroke-width="1.1"/>
<line x1="867.5" y1="200" x2="867.5" y2="285" stroke="#c4d2e2" stroke-width="1"/>
<rect x="858.2" y="229.5" width="1" height="1" fill="#d8d8e8"/>
<rect x="869.6" y="229.5" width="1" height="1" fill="#d8d8e8"/>
<rect x="862" y="285.5" width="4.8" height="9.5" fill="#2b2266" stroke="#7d6ba8" stroke-width="0.9"/>
<rect x="971.1" y="89.5" width="5.4" height="5.5" fill="#3f5255"/>
<rect x="971.1" y="95" width="5.4" height="84" fill="#9a47a3"/>
<rect x="974.9" y="99.5" width="1.6" height="80" fill="#7a58a4" opacity="0.9"/>
<rect x="971.1" y="95" width="5.4" height="4.4" fill="#6b7d96"/>
<rect x="971.4" y="179" width="4.8" height="21" fill="#7c6b90"/>
<rect x="971.4" y="200" width="4.8" height="85" fill="#886c9a"/>
<line x1="970.9" y1="220" x2="970.9" y2="285" stroke="#e4e0f4" stroke-width="1.1"/>
<line x1="976.9" y1="200" x2="976.9" y2="285" stroke="#c4d2e2" stroke-width="1"/>
<rect x="967.6" y="229.5" width="1" height="1" fill="#d8d8e8"/>
<rect x="979" y="229.5" width="1" height="1" fill="#d8d8e8"/>
<rect x="971.4" y="285.5" width="4.8" height="9.5" fill="#2b2266" stroke="#7d6ba8" stroke-width="0.9"/>
<rect x="1080.5" y="89.5" width="5.4" height="5.5" fill="#3f5255"/>
<rect x="1080.5" y="95" width="5.4" height="84" fill="#9a47a3"/>
<rect x="1084.3" y="99.5" width="1.6" height="80" fill="#7a58a4" opacity="0.9"/>
<rect x="1080.5" y="95" width="5.4" height="4.4" fill="#6b7d96"/>
<rect x="1080.8" y="179" width="4.8" height="21" fill="#7c6b90"/>
<rect x="1080.8" y="200" width="4.8" height="85" fill="#886c9a"/>
<line x1="1080.3" y1="220" x2="1080.3" y2="285" stroke="#e4e0f4" stroke-width="1.1"/>
<line x1="1086.3" y1="200" x2="1086.3" y2="285" stroke="#c4d2e2" stroke-width="1"/>
<rect x="1077" y="229.5" width="1" height="1" fill="#d8d8e8"/>
<rect x="1088.4" y="229.5" width="1" height="1" fill="#d8d8e8"/>
<line x1="1085.4" y1="73" x2="1085.4" y2="95" stroke="#c9d6da" stroke-width="1"/>
<line x1="1085.4" y1="95" x2="1085.4" y2="285" stroke="#86c2e4" stroke-width="1.2"/>
<rect x="1080.8" y="285.5" width="4.8" height="9.5" fill="#2b2266" stroke="#7d6ba8" stroke-width="0.9"/>
<rect x="1189.9" y="89.5" width="5.4" height="5.5" fill="#3f5255"/>
<rect x="1189.9" y="95" width="5.4" height="84" fill="#9a47a3"/>
<rect x="1193.7" y="99.5" width="1.6" height="80" fill="#7a58a4" opacity="0.9"/>
<rect x="1189.9" y="95" width="5.4" height="4.4" fill="#6b7d96"/>
<rect x="1190.2" y="179" width="4.8" height="21" fill="#7c6b90"/>
<rect x="1190.2" y="200" width="4.8" height="85" fill="#886c9a"/>
<line x1="1189.7" y1="220" x2="1189.7" y2="285" stroke="#e4e0f4" stroke-width="1.1"/>
<line x1="1195.7" y1="200" x2="1195.7" y2="285" stroke="#c4d2e2" stroke-width="1"/>
<rect x="1186.4" y="229.5" width="1" height="1" fill="#d8d8e8"/>
<rect x="1197.8" y="229.5" width="1" height="1" fill="#d8d8e8"/>
<rect x="1190.2" y="285.5" width="4.8" height="9.5" fill="#2b2266" stroke="#7d6ba8" stroke-width="0.9"/>
</g>
<g clip-path="url(#ct)" fill="#ffffff" font-size="13.95" stroke="#ffffff" stroke-width="0.22">
<text transform="translate(102 175.2) rotate(-70)" x="0" y="0" xml:space="preserve">Burst   1:  99 Trans for</text>
<text transform="translate(211.4 175.2) rotate(-70)" x="0" y="0" xml:space="preserve">Burst   2: 103 Trans for</text>
<text transform="translate(320.8 175.2) rotate(-70)" x="0" y="0" xml:space="preserve">Burst   3: 101 Trans for</text>
<text transform="translate(430.2 175.2) rotate(-70)" x="0" y="0" xml:space="preserve">Burst   4: 101 Trans for</text>
<text transform="translate(539.6 175.2) rotate(-70)" x="0" y="0" xml:space="preserve">Burst   5: 101 Trans for</text>
<text transform="translate(649 175.2) rotate(-70)" x="0" y="0" xml:space="preserve">Burst   6: 103 Trans for</text>
<text transform="translate(758.4 175.2) rotate(-70)" x="0" y="0" xml:space="preserve">Burst   7: 101 Trans for</text>
<text transform="translate(867.8 175.2) rotate(-70)" x="0" y="0" xml:space="preserve">Burst   8: 103 Trans for</text>
<text transform="translate(977.2 175.2) rotate(-70)" x="0" y="0" xml:space="preserve">Burst   9:  99 Trans for</text>
<text transform="translate(1086.6 175.2) rotate(-70)" x="0" y="0" xml:space="preserve">Burst  10: 101 Trans for</text>
<text transform="translate(1196 175.2) rotate(-70)" x="0" y="0" xml:space="preserve">Burst  11:  98 Trans for</text>
</g>
<text x="18.5" y="211" font-size="11" fill="#f0f4f4" textLength="73.5" lengthAdjust="spacingAndGlyphs" xml:space="preserve">31.4812963 ms</text>
<text x="153.6" y="211" font-size="11" fill="#f0f4f4" text-anchor="middle" textLength="73.5" lengthAdjust="spacingAndGlyphs" xml:space="preserve">41.6517730 ms</text>
<text x="263" y="211" font-size="11" fill="#f0f4f4" text-anchor="middle" textLength="73.5" lengthAdjust="spacingAndGlyphs" xml:space="preserve">41.4886933 ms</text>
<text x="372.4" y="211" font-size="11" fill="#f0f4f4" text-anchor="middle" textLength="73.5" lengthAdjust="spacingAndGlyphs" xml:space="preserve">41.6475978 ms</text>
<text x="481.8" y="211" font-size="11" fill="#f0f4f4" text-anchor="middle" textLength="73.5" lengthAdjust="spacingAndGlyphs" xml:space="preserve">41.6474038 ms</text>
<text x="591.2" y="211" font-size="11" fill="#f0f4f4" text-anchor="middle" textLength="73.5" lengthAdjust="spacingAndGlyphs" xml:space="preserve">41.6415987 ms</text>
<text x="700.6" y="211" font-size="11" fill="#f0f4f4" text-anchor="middle" textLength="73.5" lengthAdjust="spacingAndGlyphs" xml:space="preserve">41.6474189 ms</text>
<text x="810" y="211" font-size="11" fill="#f0f4f4" text-anchor="middle" textLength="73.5" lengthAdjust="spacingAndGlyphs" xml:space="preserve">41.6515958 ms</text>
<text x="919.4" y="211" font-size="11" fill="#f0f4f4" text-anchor="middle" textLength="73.5" lengthAdjust="spacingAndGlyphs" xml:space="preserve">41.4887977 ms</text>
<text x="1028.8" y="211" font-size="11" fill="#f0f4f4" text-anchor="middle" textLength="73.5" lengthAdjust="spacingAndGlyphs" xml:space="preserve">41.6478001 ms</text>
<text x="1138.2" y="211" font-size="11" fill="#f0f4f4" text-anchor="middle" textLength="73.5" lengthAdjust="spacingAndGlyphs" xml:space="preserve">41.6435987 ms</text>
<rect x="1219" y="282.6" width="1" height="2.2" fill="#5e5e5e"/>
<rect x="1244" y="282.6" width="1" height="2.2" fill="#5e5e5e"/>
<rect x="17.5" y="38.5" width="1252" height="301" fill="none" stroke="#8c8c8c" stroke-width="1"/>
<text x="3" y="280" font-size="9.2" fill="#d6f5ef" textLength="13" lengthAdjust="spacingAndGlyphs" xml:space="preserve">M3</text>
<path d="M7.5 285.5V283.2H17" stroke="#c4f4ee" stroke-width="1.5" fill="none"/>
<path d="M643.5 340.8L647.4 347.8H639.6Z" fill="#a6f2ea"/>
<g clip-path="url(#cb)">
<rect x="17" y="382" width="1253" height="234.5" fill="#262340"/>
<line x1="17" y1="382.5" x2="1270" y2="382.5" stroke="#4b466f" stroke-width="1"/>
<line x1="17" y1="616.3" x2="1270" y2="616.3" stroke="#8d89ad" stroke-width="1.2"/>
<line x1="142.5" y1="353" x2="142.5" y2="653" stroke="#b4b4b4" stroke-width="1" stroke-dasharray="1 2" opacity="0.8"/>
<line x1="267.5" y1="353" x2="267.5" y2="653" stroke="#b4b4b4" stroke-width="1" stroke-dasharray="1 2" opacity="0.8"/>
<line x1="393.5" y1="353" x2="393.5" y2="653" stroke="#b4b4b4" stroke-width="1" stroke-dasharray="1 2" opacity="0.8"/>
<line x1="518.5" y1="353" x2="518.5" y2="653" stroke="#b4b4b4" stroke-width="1" stroke-dasharray="1 2" opacity="0.8"/>
<line x1="768.5" y1="353" x2="768.5" y2="653" stroke="#b4b4b4" stroke-width="1" stroke-dasharray="1 2" opacity="0.8"/>
<line x1="893.5" y1="353" x2="893.5" y2="653" stroke="#b4b4b4" stroke-width="1" stroke-dasharray="1 2" opacity="0.8"/>
<line x1="1019.5" y1="353" x2="1019.5" y2="653" stroke="#b4b4b4" stroke-width="1" stroke-dasharray="1 2" opacity="0.8"/>
<line x1="1144.5" y1="353" x2="1144.5" y2="653" stroke="#b4b4b4" stroke-width="1" stroke-dasharray="1 2" opacity="0.8"/>
<line x1="18" y1="389.5" x2="1269" y2="389.5" stroke="#b4b4b4" stroke-width="1" stroke-dasharray="1 2" opacity="0.8"/>
<line x1="18" y1="427.5" x2="1269" y2="427.5" stroke="#b4b4b4" stroke-width="1" stroke-dasharray="1 2" opacity="0.8"/>
<line x1="18" y1="465.5" x2="1269" y2="465.5" stroke="#b4b4b4" stroke-width="1" stroke-dasharray="1 2" opacity="0.8"/>
<line x1="18" y1="540.5" x2="1269" y2="540.5" stroke="#b4b4b4" stroke-width="1" stroke-dasharray="1 2" opacity="0.8"/>
<line x1="18" y1="578.5" x2="1269" y2="578.5" stroke="#b4b4b4" stroke-width="1" stroke-dasharray="1 2" opacity="0.8"/>
<line x1="18" y1="616.5" x2="1269" y2="616.5" stroke="#b4b4b4" stroke-width="1" stroke-dasharray="1 2" opacity="0.8"/>
<rect x="17.5" y="418.5" width="11" height="189.5" fill="#676845" fill-opacity="0.55" stroke="#a3a294" stroke-width="1"/>
<rect x="80.5" y="418.5" width="103" height="189.5" fill="#721f56" fill-opacity="0.55" stroke="#632e66" stroke-width="1"/>
<rect x="1260.5" y="418.5" width="12" height="189.5" fill="#721f56" fill-opacity="0.55" stroke="#632e66" stroke-width="1"/>
<rect x="1004.5" y="418.5" width="204" height="189.5" fill="#686740" fill-opacity="0.5" stroke="#7d7b70" stroke-width="1"/>
<rect x="183.5" y="397.5" width="820" height="212.5" fill="#4581a0" fill-opacity="0.78" stroke="#9fc6e2" stroke-width="1"/>
<rect x="17" y="503" width="1253" height="8.5" fill="#5d5c66" opacity="0.42"/>
<rect x="17" y="511.5" width="1253" height="8.5" fill="#74727c" opacity="0.42"/>
<rect x="184" y="503" width="819" height="8.5" fill="#53898a"/>
<rect x="184" y="511.5" width="819" height="8.5" fill="#4a8380"/>
</g>
<g clip-path="url(#cb)">
<rect x="42" y="407.6" width="1" height="2" fill="#4d4a72"/>
<rect x="42" y="596.4" width="1" height="2" fill="#4d4a72"/>
<rect x="67" y="407.6" width="1" height="2" fill="#4d4a72"/>
<rect x="67" y="596.4" width="1" height="2" fill="#4d4a72"/>
<rect x="92" y="407.6" width="1" height="2" fill="#4d4a72"/>
<rect x="92" y="596.4" width="1" height="2" fill="#4d4a72"/>
<rect x="117" y="407.6" width="1" height="2" fill="#4d4a72"/>
<rect x="117" y="596.4" width="1" height="2" fill="#4d4a72"/>
<rect x="167" y="407.6" width="1" height="2" fill="#4d4a72"/>
<rect x="167" y="596.4" width="1" height="2" fill="#4d4a72"/>
<rect x="1044" y="407.6" width="1" height="2" fill="#4d4a72"/>
<rect x="1044" y="596.4" width="1" height="2" fill="#4d4a72"/>
<rect x="1069" y="407.6" width="1" height="2" fill="#4d4a72"/>
<rect x="1069" y="596.4" width="1" height="2" fill="#4d4a72"/>
<rect x="1094" y="407.6" width="1" height="2" fill="#4d4a72"/>
<rect x="1094" y="596.4" width="1" height="2" fill="#4d4a72"/>
<rect x="1119" y="407.6" width="1" height="2" fill="#4d4a72"/>
<rect x="1119" y="596.4" width="1" height="2" fill="#4d4a72"/>
<rect x="1169" y="407.6" width="1" height="2" fill="#4d4a72"/>
<rect x="1169" y="596.4" width="1" height="2" fill="#4d4a72"/>
<rect x="1194" y="407.6" width="1" height="2" fill="#4d4a72"/>
<rect x="1194" y="596.4" width="1" height="2" fill="#4d4a72"/>
<rect x="1219" y="407.6" width="1" height="2" fill="#4d4a72"/>
<rect x="1219" y="596.4" width="1" height="2" fill="#4d4a72"/>
<rect x="1244" y="407.6" width="1" height="2" fill="#4d4a72"/>
<rect x="1244" y="596.4" width="1" height="2" fill="#4d4a72"/>
<line x1="17.5" y1="503.5" x2="183.5" y2="503.5" stroke="#a09eb2" stroke-width="1"/>
<line x1="1003.5" y1="503.5" x2="1269.5" y2="503.5" stroke="#a09eb2" stroke-width="1"/>
<line x1="183.5" y1="503.5" x2="1003.5" y2="503.5" stroke="#7aa3a6" stroke-width="1"/>
<path d="M42.5 501V506M67.5 501V506M92.5 501V506M117.5 501V506M142.5 501V506M167.5 501V506M1019.5 501V506M1044.5 501V506M1069.5 501V506M1094.5 501V506M1119.5 501V506M1144.5 501V506M1169.5 501V506M1194.5 501V506M1219.5 501V506M1244.5 501V506" stroke="#a09eb2" stroke-width="1" fill="none" opacity="0.8"/>
<line x1="17.5" y1="511.5" x2="1269.5" y2="511.5" stroke="#e6e6f2" stroke-width="1" stroke-dasharray="3.4 2.6"/>
<line x1="184.4" y1="511.5" x2="1003.5" y2="511.5" stroke="#a9d6ee" stroke-width="1" stroke-dasharray="3.4 2.6"/>
<line x1="643.5" y1="352.5" x2="643.5" y2="397.5" stroke="#8a8a9a" stroke-width="1"/>
<line x1="643.5" y1="610" x2="643.5" y2="653.5" stroke="#8a8a9a" stroke-width="1"/>
<path d="M641 360.5H646M641 367.5H646M641 375.5H646M641 382.5H646M641 390.5H646M641 615.5H646M641 623.5H646M641 630.5H646M641 638.5H646M641 645.5H646" stroke="#8a8a8a" stroke-width="1" fill="none"/>
<line x1="643.5" y1="398" x2="643.5" y2="610" stroke="#5f8aa6" stroke-width="1" opacity="0.6"/>
<clipPath id="cdata"><rect x="184.5" y="398" width="819" height="212"/></clipPath>
<path d="M17.5 420.54L19 419.67L22 419.4L23.5 420.59L26 420.12L27.5 419.96L30.5 419.49L32.5 419.92L34 419.96L35.5 419.54L37 420.59L39 420.38L42 420.46L45 420.64L47 419.97L49 419.77L51 420.29L53 419.92L56 419.88L58.5 420.1L60.5 419.68L63.5 420.36L67.5 419.6L69.5 420.05L71 419.78L73.5 419.94L75.5 420.38L78 419.92L79 419.72L79.6 450L80.2 515L81.2 564.5L82.2 607.3L82.6 607.29L86.6 605.62L88.1 605.93L90.6 604.76L93.6 604.54L95.6 605.26L97.6 605L99.1 605.11L102.1 604.95L104.1 604.72L106.1 604.66L107.6 604.8L109.1 604.56L111.6 604.98L114.6 603.96L117.6 604.01L119.6 604.08L122.1 603.88L126.1 606.28L130.1 604.12L132.1 604.79L134.6 604.75L138.6 604.73L140.1 604.91L144.1 604.07L146.1 604.07L148.1 604.61L150.6 604.28L152.1 604.07L154.1 604.29L158.1 604.47L161.1 604.14L163.1 604.09L166.1 604.58L167.6 604.16L169.6 604.54L171.6 604.18L174.6 604.2L177.6 604.67L181.6 604.52L183.1 604.75L183.3 604.77L183.6 584.5L184.2 509.5L184.8 460L185.9 415.8L186.3 416.69L190.3 418.79L193.3 417.63L195.8 419.12L197.3 419.42L198.8 419.47L200.3 419.41L203.3 420.25L204.8 420.33L206.3 419.31L208.8 420.52L212.8 418.45L215.3 417.53L216.8 419.71L218.8 419.48L222.8 420.54L226.8 420.04L228.3 420.01L231.3 420.07L232.8 420.22L235.8 420.1L238.8 419.73L241.8 420.35L244.8 419.97L246.8 419.85L250.8 419.89L252.3 420.38L254.3 419.84L256.8 419.81L259.3 418.3L263.3 420.33L264.8 420.02L267.3 420.21L269.3 420.44L271.3 419.93L273.3 420.16L275.8 420.29L278.8 419.79L280.8 419.92L283.8 420.24L284.8 419.92L285.4 450L286 515L287 564.5L288 607.3L288.4 607.77L290.9 606.72L293.9 606.01L296.4 605.49L299.4 604.95L301.9 604.11L304.9 604.51L308.9 604.32L312.9 604.38L315.4 604.29L317.4 605.14L320.4 605.04L321.9 603.9L324.9 604.24L327.4 604.56L331.4 604.94L334.4 604.4L338.4 604.66L339.9 604.66L341.4 604.42L345.4 604.89L347.4 604.92L350.4 604.74L354.4 604.36L355.9 604.2L357.4 604.79L358.9 604.64L361.4 604.79L364.4 604.62L368.4 604.24L371.4 604.21L375.4 604.15L376.9 603.37L379.4 604.69L381.9 604.41L383.4 604.65L386.4 604.74L387.3 604.51L387.6 584.5L388.2 509.5L388.8 460L389.9 415.8L390.3 415.92L394.3 417.87L398.3 418.74L400.3 420.12L403.3 419.89L404.8 420L408.8 419.67L411.3 417.69L415.3 419.39L419.3 421.48L423.3 418.4L427.3 419.64L429.3 420.58L431.8 419.33L434.8 419.73L437.8 420.43L440.8 420.16L443.8 419.83L446.8 419.57L448.3 419.71L450.3 419.56L453.3 420.06L457.3 420.33L458.8 420.42L461.3 420.05L464.3 419.81L465.8 418.5L467.8 420.19L470.3 420.04L474.3 419.95L476.3 419.69L479.3 419.89L481.3 419.82L483.3 419.75L485.3 420.4L489.3 420.36L490 420.03L490.6 450L491.2 515L492.2 564.5L493.2 607.3L493.6 606.97L495.6 606.87L499.6 604.9L502.6 604.44L504.6 604.66L506.1 605.09L508.1 604.49L509.6 604.1L513.6 604.94L516.1 604L519.1 604.24L522.1 604.89L524.1 605.11L526.6 604.75L529.1 606.69L531.1 605.18L532.6 604.07L536.6 604.82L538.1 604.37L541.1 604.23L544.1 604.72L546.1 604.56L549.1 604.7L552.1 604.65L553.6 604.15L556.1 604.86L560.1 603.3L561.6 604.08L564.1 604.72L567.1 604.95L569.1 604.3L572.1 604.45L576.1 604.71L579.1 604.51L581.1 604.44L583.1 604.49L587.1 604.29L589.1 604.54L590.6 604.2L592.1 604.23L594.1 604.67L597.1 604.26L601.1 604.67L603.6 604.68L605.6 604.58L607.1 604.54L609.1 604.66L612.1 604.81L614.1 604.15L616.6 605.59L619.1 604.23L622.1 604.92L625.1 604.47L627.1 605.65L630.1 604.13L634.1 604.29L637.1 604.49L639.6 604.06L642.1 604.61L644.6 604.64L646.1 604.07L648.1 604.32L652.1 604.81L654.1 604.14L656.6 604.72L658.6 604.63L660.6 604.38L663.1 604.8L664.6 604.09L667.6 604.86L670.6 604.43L673.1 604.59L675.1 604.67L678.1 604.62L679.6 604.82L681.6 605.8L683.6 604.3L687.6 604.69L689.1 604.44L691.1 604.86L693.6 604.05L695 604.55L695.3 584.5L695.9 509.5L696.5 460L697.6 415.8L698 416.36L702 418.33L704 419.56L708 418.95L710.5 419.85L714.5 419.76L716.5 419.64L718 420.4L721 420.22L725 419.81L728 419.8L731 419.86L733 420.63L734.5 419.62L736 419.58L739 419.63L743 420.06L747 420.37L750 420.16L752 420.33L753.5 420.11L757.5 419.64L760.5 420.04L762.5 420.06L764.5 419.89L767.5 419.76L769 420.18L772 419.82L775 420.37L777 420.06L779.5 419.7L782 420.27L783.5 420.29L786 420.01L788.5 421.3L790 419.87L794 419.65L796 419.78L799 419.57L802 418.35L803.5 420.27L807.5 420.39L810.5 420.3L813 420.03L815.5 421.5L817.5 419.99L819 418.97L823 420.29L826 420.31L829 419.9L833 420.02L837 419.74L841 420.11L843.5 420.2L846.5 419.9L848 419.85L850 419.57L854 419.59L856 419.8L860 420.44L864 420.03L865.5 420.37L867 420.34L871 420.12L873.5 420.26L875.5 420.16L878 420.22L880 419.87L883 419.85L885.5 420.35L889.5 419.88L891.5 420.45L893.5 419.56L896.5 419.91L899 420.39L900.3 419.84L900.9 450L901.5 515L902.5 564.5L903.5 607.3L903.9 606.84L907.9 606.05L909.4 606.11L910.9 605.42L913.4 605.69L916.4 605.12L919.4 604.45L921.9 604.69L924.4 602.28L927.4 604.48L929.9 605.03L931.9 602.23L935.9 603.9L939.9 604.29L941.9 604.19L943.4 604.69L945.4 604.26L946.9 604.7L949.4 604.21L950.9 604.13L953.9 604.94L956.9 605.94L960.9 604.64L963.9 604.6L966.4 602.89L968.4 604.53L970.9 604.78L974.9 604.66L976.9 604.64L979.4 604.26L982.4 604.74L984.9 604.64L987.9 604.55L991.9 604.9L993.4 604.55L995.9 604.19L998.9 604.73L1000.4 604.61L1003.6 604.5L1003.9 584.5L1004.5 509.5L1005.1 460L1006.2 415.8L1006.6 416.47L1010.6 418.2L1012.6 419.42L1014.6 419.31L1016.6 419.43L1018.6 419.86L1021.6 419.77L1023.1 419.34L1024.6 420.32L1027.1 419.35L1030.1 420.52L1032.1 420.99L1034.1 419.62L1037.1 420.18L1040.1 419.61L1042.1 419.97L1044.6 420.61L1047.1 419.71L1050.1 420.5L1052.6 420.16L1055.6 418.44L1058.1 419.59L1061.1 419.71L1063.6 420.17L1065.6 421.53L1067.6 420L1069.6 419.97L1072.6 419.86L1075.6 420.34L1077.1 420.08L1078.6 419.58L1080.6 420.07L1082.1 419.59L1083.6 420.34L1086.6 420.42L1088.1 419.71L1090.1 420.12L1091.6 420.03L1093.1 419.86L1095.1 420.21L1097.1 419.56L1098.6 420.83L1101.1 419.56L1104.1 420.04L1107.1 420.43L1109.6 419.91L1112.6 419.89L1115.6 420.34L1117.1 419.77L1119.6 420.17L1121.6 420.29L1123.1 420.31L1124.6 419.92L1127.6 420.04L1131.6 419.55L1134.6 420.01L1137.6 419.76L1140.6 419.87L1144.6 419.79L1147.1 419.61L1149.1 420.38L1151.6 420.37L1154.1 420.02L1156.1 420.45L1160.1 419.88L1162.1 420.28L1164.1 419.69L1166.1 420.13L1167.6 419.84L1170.6 419.66L1173.1 419.89L1177.1 420.02L1178.6 419.8L1181.6 420.18L1184.6 420.21L1188.6 419.68L1191.1 419.99L1195.1 419.88L1198.1 419.78L1199.6 418.76L1202.1 420.2L1204.6 419.78L1207.6 419.63L1209.1 419.73L1211.6 420.11L1213.1 420.2L1214.6 420.19L1217.6 419.94L1220.1 419.87L1224.1 419.67L1228.1 419.89L1230.6 420.32L1233.6 419.89L1236.6 420.39L1238.1 419.65L1241.1 420.18L1244.1 419.71L1247.1 419.99L1248.6 420.15L1251.6 420.04L1254.1 420.05L1257.1 419.66L1258.6 421.16L1259 420.28L1259.6 450L1260.2 515L1261.2 564.5L1262.2 607.3L1262.6 606.72L1264.6 606.65L1266.1 606.02L1270 604.21" stroke="#c9ee4e" stroke-width="1.05" fill="none" stroke-linejoin="round"/>
<g clip-path="url(#cdata)"><path d="M17.5 420.54L19 419.67L22 419.4L23.5 420.59L26 420.12L27.5 419.96L30.5 419.49L32.5 419.92L34 419.96L35.5 419.54L37 420.59L39 420.38L42 420.46L45 420.64L47 419.97L49 419.77L51 420.29L53 419.92L56 419.88L58.5 420.1L60.5 419.68L63.5 420.36L67.5 419.6L69.5 420.05L71 419.78L73.5 419.94L75.5 420.38L78 419.92L79 419.72L79.6 450L80.2 515L81.2 564.5L82.2 607.3L82.6 607.29L86.6 605.62L88.1 605.93L90.6 604.76L93.6 604.54L95.6 605.26L97.6 605L99.1 605.11L102.1 604.95L104.1 604.72L106.1 604.66L107.6 604.8L109.1 604.56L111.6 604.98L114.6 603.96L117.6 604.01L119.6 604.08L122.1 603.88L126.1 606.28L130.1 604.12L132.1 604.79L134.6 604.75L138.6 604.73L140.1 604.91L144.1 604.07L146.1 604.07L148.1 604.61L150.6 604.28L152.1 604.07L154.1 604.29L158.1 604.47L161.1 604.14L163.1 604.09L166.1 604.58L167.6 604.16L169.6 604.54L171.6 604.18L174.6 604.2L177.6 604.67L181.6 604.52L183.1 604.75L183.3 604.77L183.6 584.5L184.2 509.5L184.8 460L185.9 415.8L186.3 416.69L190.3 418.79L193.3 417.63L195.8 419.12L197.3 419.42L198.8 419.47L200.3 419.41L203.3 420.25L204.8 420.33L206.3 419.31L208.8 420.52L212.8 418.45L215.3 417.53L216.8 419.71L218.8 419.48L222.8 420.54L226.8 420.04L228.3 420.01L231.3 420.07L232.8 420.22L235.8 420.1L238.8 419.73L241.8 420.35L244.8 419.97L246.8 419.85L250.8 419.89L252.3 420.38L254.3 419.84L256.8 419.81L259.3 418.3L263.3 420.33L264.8 420.02L267.3 420.21L269.3 420.44L271.3 419.93L273.3 420.16L275.8 420.29L278.8 419.79L280.8 419.92L283.8 420.24L284.8 419.92L285.4 450L286 515L287 564.5L288 607.3L288.4 607.77L290.9 606.72L293.9 606.01L296.4 605.49L299.4 604.95L301.9 604.11L304.9 604.51L308.9 604.32L312.9 604.38L315.4 604.29L317.4 605.14L320.4 605.04L321.9 603.9L324.9 604.24L327.4 604.56L331.4 604.94L334.4 604.4L338.4 604.66L339.9 604.66L341.4 604.42L345.4 604.89L347.4 604.92L350.4 604.74L354.4 604.36L355.9 604.2L357.4 604.79L358.9 604.64L361.4 604.79L364.4 604.62L368.4 604.24L371.4 604.21L375.4 604.15L376.9 603.37L379.4 604.69L381.9 604.41L383.4 604.65L386.4 604.74L387.3 604.51L387.6 584.5L388.2 509.5L388.8 460L389.9 415.8L390.3 415.92L394.3 417.87L398.3 418.74L400.3 420.12L403.3 419.89L404.8 420L408.8 419.67L411.3 417.69L415.3 419.39L419.3 421.48L423.3 418.4L427.3 419.64L429.3 420.58L431.8 419.33L434.8 419.73L437.8 420.43L440.8 420.16L443.8 419.83L446.8 419.57L448.3 419.71L450.3 419.56L453.3 420.06L457.3 420.33L458.8 420.42L461.3 420.05L464.3 419.81L465.8 418.5L467.8 420.19L470.3 420.04L474.3 419.95L476.3 419.69L479.3 419.89L481.3 419.82L483.3 419.75L485.3 420.4L489.3 420.36L490 420.03L490.6 450L491.2 515L492.2 564.5L493.2 607.3L493.6 606.97L495.6 606.87L499.6 604.9L502.6 604.44L504.6 604.66L506.1 605.09L508.1 604.49L509.6 604.1L513.6 604.94L516.1 604L519.1 604.24L522.1 604.89L524.1 605.11L526.6 604.75L529.1 606.69L531.1 605.18L532.6 604.07L536.6 604.82L538.1 604.37L541.1 604.23L544.1 604.72L546.1 604.56L549.1 604.7L552.1 604.65L553.6 604.15L556.1 604.86L560.1 603.3L561.6 604.08L564.1 604.72L567.1 604.95L569.1 604.3L572.1 604.45L576.1 604.71L579.1 604.51L581.1 604.44L583.1 604.49L587.1 604.29L589.1 604.54L590.6 604.2L592.1 604.23L594.1 604.67L597.1 604.26L601.1 604.67L603.6 604.68L605.6 604.58L607.1 604.54L609.1 604.66L612.1 604.81L614.1 604.15L616.6 605.59L619.1 604.23L622.1 604.92L625.1 604.47L627.1 605.65L630.1 604.13L634.1 604.29L637.1 604.49L639.6 604.06L642.1 604.61L644.6 604.64L646.1 604.07L648.1 604.32L652.1 604.81L654.1 604.14L656.6 604.72L658.6 604.63L660.6 604.38L663.1 604.8L664.6 604.09L667.6 604.86L670.6 604.43L673.1 604.59L675.1 604.67L678.1 604.62L679.6 604.82L681.6 605.8L683.6 604.3L687.6 604.69L689.1 604.44L691.1 604.86L693.6 604.05L695 604.55L695.3 584.5L695.9 509.5L696.5 460L697.6 415.8L698 416.36L702 418.33L704 419.56L708 418.95L710.5 419.85L714.5 419.76L716.5 419.64L718 420.4L721 420.22L725 419.81L728 419.8L731 419.86L733 420.63L734.5 419.62L736 419.58L739 419.63L743 420.06L747 420.37L750 420.16L752 420.33L753.5 420.11L757.5 419.64L760.5 420.04L762.5 420.06L764.5 419.89L767.5 419.76L769 420.18L772 419.82L775 420.37L777 420.06L779.5 419.7L782 420.27L783.5 420.29L786 420.01L788.5 421.3L790 419.87L794 419.65L796 419.78L799 419.57L802 418.35L803.5 420.27L807.5 420.39L810.5 420.3L813 420.03L815.5 421.5L817.5 419.99L819 418.97L823 420.29L826 420.31L829 419.9L833 420.02L837 419.74L841 420.11L843.5 420.2L846.5 419.9L848 419.85L850 419.57L854 419.59L856 419.8L860 420.44L864 420.03L865.5 420.37L867 420.34L871 420.12L873.5 420.26L875.5 420.16L878 420.22L880 419.87L883 419.85L885.5 420.35L889.5 419.88L891.5 420.45L893.5 419.56L896.5 419.91L899 420.39L900.3 419.84L900.9 450L901.5 515L902.5 564.5L903.5 607.3L903.9 606.84L907.9 606.05L909.4 606.11L910.9 605.42L913.4 605.69L916.4 605.12L919.4 604.45L921.9 604.69L924.4 602.28L927.4 604.48L929.9 605.03L931.9 602.23L935.9 603.9L939.9 604.29L941.9 604.19L943.4 604.69L945.4 604.26L946.9 604.7L949.4 604.21L950.9 604.13L953.9 604.94L956.9 605.94L960.9 604.64L963.9 604.6L966.4 602.89L968.4 604.53L970.9 604.78L974.9 604.66L976.9 604.64L979.4 604.26L982.4 604.74L984.9 604.64L987.9 604.55L991.9 604.9L993.4 604.55L995.9 604.19L998.9 604.73L1000.4 604.61L1003.6 604.5L1003.9 584.5L1004.5 509.5L1005.1 460L1006.2 415.8L1006.6 416.47L1010.6 418.2L1012.6 419.42L1014.6 419.31L1016.6 419.43L1018.6 419.86L1021.6 419.77L1023.1 419.34L1024.6 420.32L1027.1 419.35L1030.1 420.52L1032.1 420.99L1034.1 419.62L1037.1 420.18L1040.1 419.61L1042.1 419.97L1044.6 420.61L1047.1 419.71L1050.1 420.5L1052.6 420.16L1055.6 418.44L1058.1 419.59L1061.1 419.71L1063.6 420.17L1065.6 421.53L1067.6 420L1069.6 419.97L1072.6 419.86L1075.6 420.34L1077.1 420.08L1078.6 419.58L1080.6 420.07L1082.1 419.59L1083.6 420.34L1086.6 420.42L1088.1 419.71L1090.1 420.12L1091.6 420.03L1093.1 419.86L1095.1 420.21L1097.1 419.56L1098.6 420.83L1101.1 419.56L1104.1 420.04L1107.1 420.43L1109.6 419.91L1112.6 419.89L1115.6 420.34L1117.1 419.77L1119.6 420.17L1121.6 420.29L1123.1 420.31L1124.6 419.92L1127.6 420.04L1131.6 419.55L1134.6 420.01L1137.6 419.76L1140.6 419.87L1144.6 419.79L1147.1 419.61L1149.1 420.38L1151.6 420.37L1154.1 420.02L1156.1 420.45L1160.1 419.88L1162.1 420.28L1164.1 419.69L1166.1 420.13L1167.6 419.84L1170.6 419.66L1173.1 419.89L1177.1 420.02L1178.6 419.8L1181.6 420.18L1184.6 420.21L1188.6 419.68L1191.1 419.99L1195.1 419.88L1198.1 419.78L1199.6 418.76L1202.1 420.2L1204.6 419.78L1207.6 419.63L1209.1 419.73L1211.6 420.11L1213.1 420.2L1214.6 420.19L1217.6 419.94L1220.1 419.87L1224.1 419.67L1228.1 419.89L1230.6 420.32L1233.6 419.89L1236.6 420.39L1238.1 419.65L1241.1 420.18L1244.1 419.71L1247.1 419.99L1248.6 420.15L1251.6 420.04L1254.1 420.05L1257.1 419.66L1258.6 421.16L1259 420.28L1259.6 450L1260.2 515L1261.2 564.5L1262.2 607.3L1262.6 606.72L1264.6 606.65L1266.1 606.02L1270 604.21" stroke="#a6f286" stroke-width="1.05" fill="none" stroke-linejoin="round"/></g>
</g>
<text x="643.7" y="392.7" font-size="11" fill="#f2f2fb" text-anchor="middle" textLength="227" lengthAdjust="spacingAndGlyphs" xml:space="preserve">Burst  6: 103 Trans for 196 Bits and 17 Words</text>
<text x="593.5" y="407.4" font-size="11" fill="#f2f6fb" text-anchor="middle" textLength="58" lengthAdjust="spacingAndGlyphs" xml:space="preserve">Data = 0x65</text>
<text x="131.5" y="429.2" font-size="11" fill="#f2f2fb" text-anchor="middle" textLength="73" lengthAdjust="spacingAndGlyphs" xml:space="preserve">PrePad = 0x00</text>
<text x="1107.5" y="429.2" font-size="11" fill="#f2f2fb" text-anchor="middle" textLength="79" lengthAdjust="spacingAndGlyphs" xml:space="preserve">PostPad = 0x03</text>
<rect x="17.5" y="352.5" width="1252" height="301" fill="none" stroke="#8c8c8c" stroke-width="1"/>
<text x="5" y="603.2" font-size="9.2" fill="#b9f04e" textLength="11.5" lengthAdjust="spacingAndGlyphs" xml:space="preserve">Z4</text>
<path d="M7.5 608V605.9H17" stroke="#b9f04e" stroke-width="1.5" fill="none"/>
<path d="M11.3 658.5H18M14.6 655.2L11.3 658.5L14.6 661.8" stroke="#b9f04e" stroke-width="1.3" fill="none"/>
<rect x="3.5" y="663.5" width="1242" height="64" rx="2" fill="#1b1b1b" stroke="#6e6e6e" stroke-width="1"/>
<rect x="4" y="664" width="39.5" height="15.5" fill="#aefcfc"/>
<line x1="43.5" y1="664" x2="43.5" y2="727" stroke="#7c7c8c" stroke-width="1" stroke-dasharray="1 1"/>
<line x1="133.5" y1="664" x2="133.5" y2="727" stroke="#7c7c8c" stroke-width="1" stroke-dasharray="1 1"/>
<line x1="193.5" y1="664" x2="193.5" y2="727" stroke="#7c7c8c" stroke-width="1" stroke-dasharray="1 1"/>
<line x1="243.5" y1="664" x2="243.5" y2="727" stroke="#7c7c8c" stroke-width="1" stroke-dasharray="1 1"/>
<line x1="463.5" y1="664" x2="463.5" y2="727" stroke="#7c7c8c" stroke-width="1" stroke-dasharray="1 1"/>
<line x1="513.5" y1="664" x2="513.5" y2="727" stroke="#7c7c8c" stroke-width="1" stroke-dasharray="1 1"/>
<line x1="573.5" y1="664" x2="573.5" y2="727" stroke="#7c7c8c" stroke-width="1" stroke-dasharray="1 1"/>
<line x1="4" y1="679.5" x2="1245" y2="679.5" stroke="#74748a" stroke-width="1" stroke-dasharray="1 1"/>
<line x1="4" y1="695.5" x2="1245" y2="695.5" stroke="#74748a" stroke-width="1" stroke-dasharray="1 1"/>
<line x1="4" y1="711.5" x2="1245" y2="711.5" stroke="#74748a" stroke-width="1" stroke-dasharray="1 1"/>
<text x="5.5" y="675.7" font-size="12" fill="#000" textLength="24.5" lengthAdjust="spacingAndGlyphs" stroke="#000" stroke-width="0.3" xml:space="preserve">NRZ</text>
<text x="45" y="675.7" font-size="12" fill="#f4f4f4" font-weight="bold" textLength="27.5" lengthAdjust="spacingAndGlyphs" xml:space="preserve">Time</text>
<text x="136" y="675.7" font-size="12" fill="#f4f4f4" font-weight="bold" textLength="27" lengthAdjust="spacingAndGlyphs" xml:space="preserve">Sync</text>
<text x="195" y="675.7" font-size="12" fill="#f4f4f4" font-weight="bold" textLength="41.5" lengthAdjust="spacingAndGlyphs" xml:space="preserve">PrePad</text>
<text x="245" y="675.7" font-size="12" fill="#f4f4f4" font-weight="bold" textLength="26.5" lengthAdjust="spacingAndGlyphs" xml:space="preserve">Data</text>
<text x="465" y="675.7" font-size="12" fill="#f4f4f4" font-weight="bold" textLength="36" lengthAdjust="spacingAndGlyphs" xml:space="preserve">Post...</text>
<text x="515" y="675.7" font-size="12" fill="#f4f4f4" font-weight="bold" textLength="19.5" lengthAdjust="spacingAndGlyphs" xml:space="preserve">IFG</text>
<text x="575" y="675.7" font-size="12" fill="#f4f4f4" font-weight="bold" textLength="36.5" lengthAdjust="spacingAndGlyphs" xml:space="preserve">Status</text>
<text x="5" y="691.8" font-size="12" fill="#f4f4f4" xml:space="preserve">1</text>
<text x="45" y="691.8" font-size="12" fill="#f4f4f4" textLength="77.5" lengthAdjust="spacingAndGlyphs" xml:space="preserve">-218.518731...</text>
<text x="135.5" y="691.8" font-size="12" fill="#f4f4f4" textLength="48.5" lengthAdjust="spacingAndGlyphs" xml:space="preserve">100.00...</text>
<text x="195" y="691.8" font-size="12" fill="#f4f4f4" textLength="41.5" lengthAdjust="spacingAndGlyphs" xml:space="preserve">00 00...</text>
<text x="245" y="691.8" font-size="12" fill="#f4f4f4" textLength="204.5" lengthAdjust="spacingAndGlyphs" xml:space="preserve">00 00 4c 65 43 72 6f 79 20 55 41 52...</text>
<text x="465" y="691.8" font-size="12" fill="#f4f4f4" textLength="41.5" lengthAdjust="spacingAndGlyphs" xml:space="preserve">03 03...</text>
<text x="515" y="691.8" font-size="12" fill="#f4f4f4" textLength="48.5" lengthAdjust="spacingAndGlyphs" xml:space="preserve">31.481...</text>
<text x="575" y="691.8" font-size="12" fill="#f4f4f4" textLength="245" lengthAdjust="spacingAndGlyphs" xml:space="preserve">Burst   1:  99 Trans for 196 Bits and 17 Words</text>
<text x="5" y="707.8" font-size="12" fill="#f4f4f4" xml:space="preserve">2</text>
<text x="45" y="707.8" font-size="12" fill="#f4f4f4" textLength="77.5" lengthAdjust="spacingAndGlyphs" xml:space="preserve">-174.827331...</text>
<text x="135.5" y="707.8" font-size="12" fill="#f4f4f4" textLength="48.5" lengthAdjust="spacingAndGlyphs" xml:space="preserve">100.00...</text>
<text x="195" y="707.8" font-size="12" fill="#f4f4f4" textLength="41.5" lengthAdjust="spacingAndGlyphs" xml:space="preserve">00 00...</text>
<text x="245" y="707.8" font-size="12" fill="#f4f4f4" textLength="204.5" lengthAdjust="spacingAndGlyphs" xml:space="preserve">00 00 4c 65 43 72 6f 79 20 55 41 52...</text>
<text x="465" y="707.8" font-size="12" fill="#f4f4f4" textLength="41.5" lengthAdjust="spacingAndGlyphs" xml:space="preserve">03 03...</text>
<text x="515" y="707.8" font-size="12" fill="#f4f4f4" textLength="48.5" lengthAdjust="spacingAndGlyphs" xml:space="preserve">41.651...</text>
<text x="575" y="707.8" font-size="12" fill="#f4f4f4" textLength="247.5" lengthAdjust="spacingAndGlyphs" xml:space="preserve">Burst   2: 103 Trans for 211 Bits and 19 Words</text>
<text x="5" y="723.8" font-size="12" fill="#f4f4f4" xml:space="preserve">3</text>
<text x="45" y="723.8" font-size="12" fill="#f4f4f4" textLength="77.5" lengthAdjust="spacingAndGlyphs" xml:space="preserve">-131.145929...</text>
<text x="135.5" y="723.8" font-size="12" fill="#f4f4f4" textLength="48.5" lengthAdjust="spacingAndGlyphs" xml:space="preserve">100.00...</text>
<text x="195" y="723.8" font-size="12" fill="#f4f4f4" textLength="41.5" lengthAdjust="spacingAndGlyphs" xml:space="preserve">00 00...</text>
<text x="245" y="723.8" font-size="12" fill="#f4f4f4" textLength="204.5" lengthAdjust="spacingAndGlyphs" xml:space="preserve">00 00 4c 65 43 72 6f 79 20 55 41 52...</text>
<text x="465" y="723.8" font-size="12" fill="#f4f4f4" textLength="41.5" lengthAdjust="spacingAndGlyphs" xml:space="preserve">03 03...</text>
<text x="515" y="723.8" font-size="12" fill="#f4f4f4" textLength="48.5" lengthAdjust="spacingAndGlyphs" xml:space="preserve">41.488...</text>
<text x="575" y="723.8" font-size="12" fill="#f4f4f4" textLength="247.5" lengthAdjust="spacingAndGlyphs" xml:space="preserve">Burst   3: 101 Trans for 196 Bits and 17 Words</text>
<rect x="1248.5" y="664.5" width="28" height="29" rx="2" fill="url(#sb)" stroke="#111" stroke-width="1"/>
<rect x="1248.5" y="698.5" width="28" height="29" rx="2" fill="url(#sb)" stroke="#111" stroke-width="1"/>
<path d="M1262.5 672L1276 686H1249Z" fill="#ececec"/>
<path d="M1262.5 721L1276 707.4H1249Z" fill="#ececec"/>
<path d="M0 800V737Q0 731.5 6 731.5H1274Q1280 731.5 1280 737V800Z" fill="#1d1d1d"/>
<path d="M0.5 740V737Q0.5 731.5 6 731.5H1274Q1279.5 731.5 1279.5 737V740" fill="none" stroke="#4c4c4c" stroke-width="1"/>
<rect x="5" y="734.5" width="95.5" height="46" rx="2.5" fill="url(#z4)"/>
<rect x="6" y="735.5" width="24" height="14.5" rx="2" fill="#86e232"/>
<text x="9.5" y="747" font-size="12" fill="#0a1400" font-weight="bold" textLength="16.5" lengthAdjust="spacingAndGlyphs" xml:space="preserve">Z4</text>
<text x="99.5" y="745.2" font-size="12" fill="#f2f2f2" text-anchor="end" textLength="55" lengthAdjust="spacingAndGlyphs" xml:space="preserve">zoom(M3)</text>
<text x="99.5" y="762" font-size="12" fill="#f2f2f2" text-anchor="end" textLength="53" lengthAdjust="spacingAndGlyphs" xml:space="preserve">1.00 V/div</text>
<text x="99.5" y="776.7" font-size="12" fill="#f2f2f2" text-anchor="end" textLength="58.5" lengthAdjust="spacingAndGlyphs" xml:space="preserve">12.2 µs/div</text>
<rect x="105" y="734.5" width="95.5" height="46" rx="2.5" fill="url(#m3)" stroke="#3a3a3a" stroke-width="0.8"/>
<path d="M105 749.5V737Q105 734.5 107.5 734.5H131V747.5Q131 749.5 129 749.5Z" fill="#b4f4f4"/>
<text x="109.5" y="747" font-size="12" fill="#001014" font-weight="bold" textLength="17" lengthAdjust="spacingAndGlyphs" xml:space="preserve">M3</text>
<text x="198" y="762" font-size="12" fill="#f2f2f2" text-anchor="end" textLength="53" lengthAdjust="spacingAndGlyphs" xml:space="preserve">1.00 V/div</text>
<text x="198" y="776.7" font-size="12" fill="#f2f2f2" text-anchor="end" textLength="61" lengthAdjust="spacingAndGlyphs" xml:space="preserve">50.0 ms/div</text>
<rect x="1064.5" y="734.5" width="110" height="44" rx="2.5" fill="url(#m3)" stroke="#555" stroke-width="0.8"/>
<path d="M1064.5 749.5V737Q1064.5 734.5 1067 734.5H1172Q1174.5 734.5 1174.5 737V749.5Z" fill="url(#hdr)"/>
<text x="1066.5" y="745" font-size="12" fill="#f6f6f6" font-weight="bold" textLength="55" lengthAdjust="spacingAndGlyphs" xml:space="preserve">Timebase</text>
<text x="1172.5" y="745" font-size="12" fill="#f2f2f2" text-anchor="end" textLength="22.5" lengthAdjust="spacingAndGlyphs" xml:space="preserve">0 ns</text>
<text x="1172.5" y="762" font-size="12" fill="#f2f2f2" text-anchor="end" textLength="56.5" lengthAdjust="spacingAndGlyphs" xml:space="preserve">200 ns/div</text>
<text x="1066" y="774.8" font-size="12" fill="#f2f2f2" textLength="24" lengthAdjust="spacingAndGlyphs" xml:space="preserve">5 kS</text>
<text x="1171" y="774.8" font-size="12" fill="#f2f2f2" text-anchor="end" textLength="46" lengthAdjust="spacingAndGlyphs" xml:space="preserve">2.5 GS/s</text>
<rect x="1179.5" y="734.5" width="94.5" height="44" rx="2.5" fill="url(#m3)" stroke="#555" stroke-width="0.8"/>
<path d="M1179.5 749.5V737Q1179.5 734.5 1182 734.5H1271.5Q1274 734.5 1274 737V749.5Z" fill="url(#hdr)"/>
<text x="1181.5" y="745" font-size="12" fill="#f6f6f6" font-weight="bold" textLength="41" lengthAdjust="spacingAndGlyphs" xml:space="preserve">Trigger</text>
<rect x="1234" y="735.8" width="16.5" height="11" rx="1.5" fill="#000"/>
<rect x="1252" y="735.8" width="19" height="11" rx="1.5" fill="#000"/>
<text x="1236.3" y="745.2" font-size="10.5" fill="#f2f2f2" textLength="12" lengthAdjust="spacingAndGlyphs" xml:space="preserve">C1</text>
<text x="1254.3" y="745.2" font-size="10.5" fill="#f2f2f2" textLength="14.5" lengthAdjust="spacingAndGlyphs" xml:space="preserve">DC</text>
<text x="1181" y="762" font-size="12" fill="#f2f2f2" textLength="25" lengthAdjust="spacingAndGlyphs" xml:space="preserve">Stop</text>
<text x="1272" y="762" font-size="12" fill="#f2f2f2" text-anchor="end" textLength="38.5" lengthAdjust="spacingAndGlyphs" xml:space="preserve">0.0 mV</text>
<text x="1181" y="774.8" font-size="12" fill="#f2f2f2" textLength="29" lengthAdjust="spacingAndGlyphs" xml:space="preserve">Edge</text>
<text x="1272" y="774.8" font-size="12" fill="#f2f2f2" text-anchor="end" textLength="43" lengthAdjust="spacingAndGlyphs" xml:space="preserve">Positive</text>
<rect x="0" y="781.8" width="1280" height="2.4" fill="#5a9d1c"/>
<rect x="0" y="784.2" width="1280" height="16" fill="#1c1c1c"/>
<text x="7" y="797.4" font-size="15.4" font-weight="bold" fill="#f6f6f6" stroke="#f6f6f6" stroke-width="0.45" textLength="66" lengthAdjust="spacingAndGlyphs">TELEDYNE</text>
<text x="77.7" y="797.4" font-size="15.4" fill="#c6c6c6" stroke="#c6c6c6" stroke-width="0.3" textLength="45" lengthAdjust="spacingAndGlyphs">LECROY</text>
<text x="1264" y="796" font-size="12" fill="#f2f2f2" text-anchor="end" textLength="119" lengthAdjust="spacingAndGlyphs" xml:space="preserve">2/7/2013 12:24:20 PM</text>
</svg></body></html>
